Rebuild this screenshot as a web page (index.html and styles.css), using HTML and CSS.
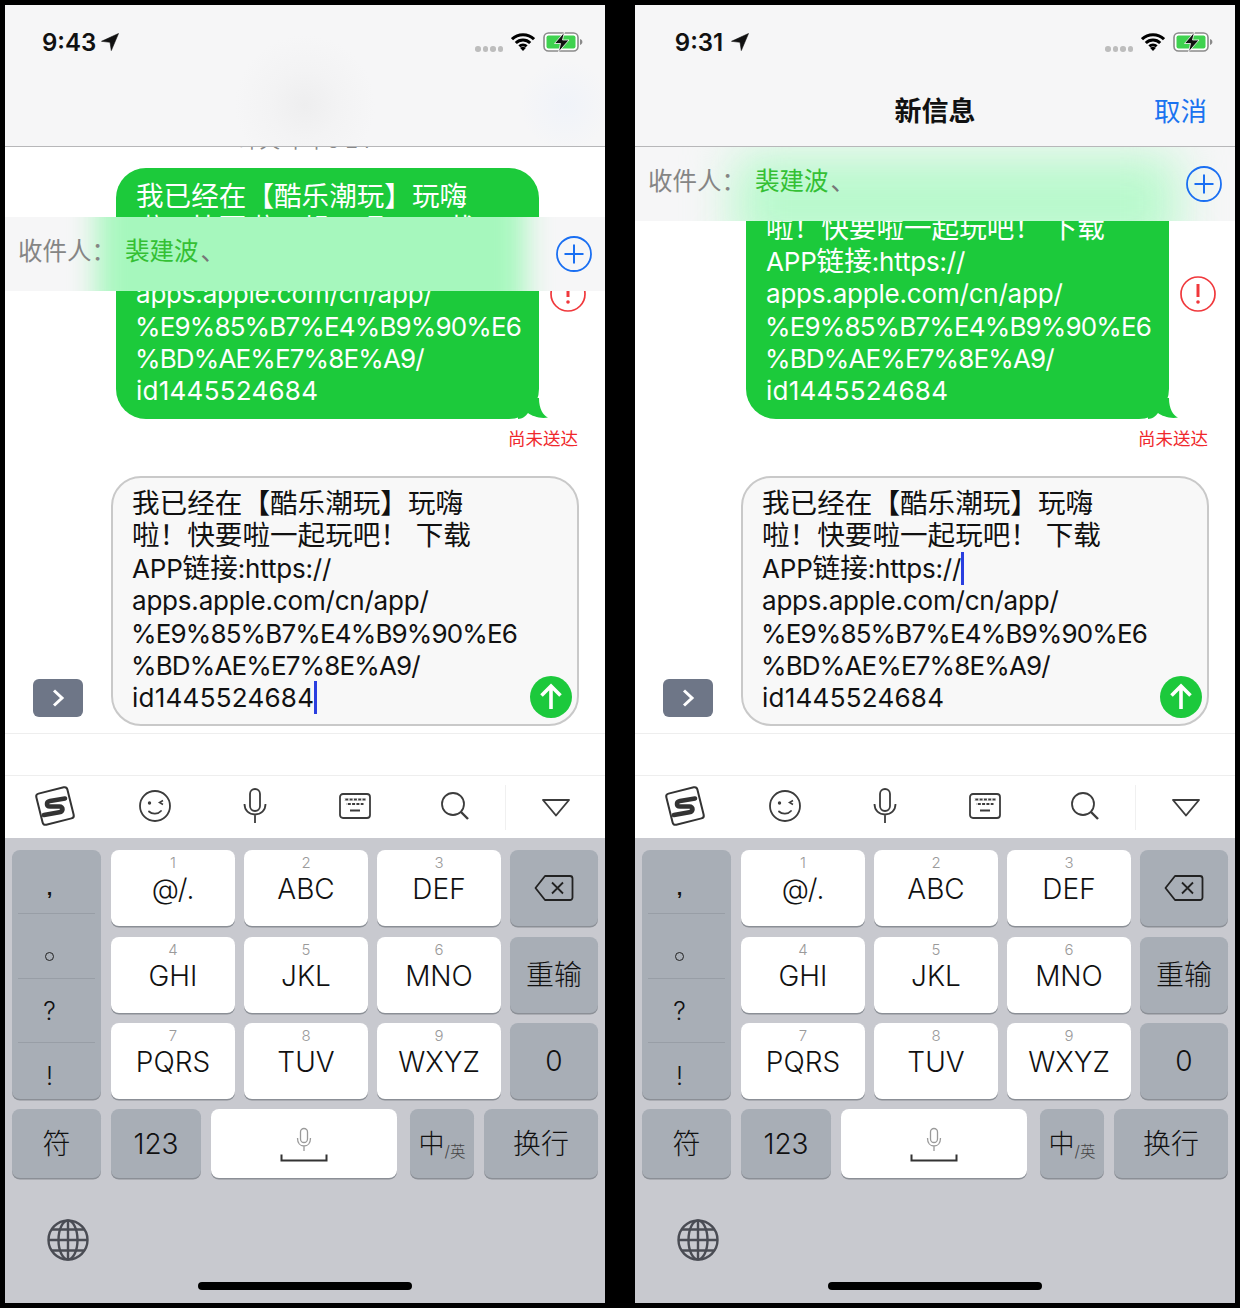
FILE: index.html
```html
<!DOCTYPE html>
<html lang="zh-CN">
<head>
    <meta charset="UTF-8">
    <title>新信息</title>
    <link rel="stylesheet" href="styles.css">
</head>
<body>
    <svg class="defs" width="0" height="0">
        <symbol id="i-arrow" viewBox="0 0 18 18"><path d="M17.500.500.500 8.300l8.500 1 1.300 8.300z" fill="#111" stroke="#111" stroke-width=".6" stroke-linejoin="round"/></symbol>
        <symbol id="i-wifi" viewBox="0 0 24 18"><path d="M1 6.200a15.600 15.600 0 0 1 22 0M4.800 10a10.200 10.200 0 0 1 14.400 0M8.400 13.400a5.100 5.100 0 0 1 7.200 0" fill="none" stroke="#000" stroke-width="3"/><path d="M12 18 9.200 15a4 4 0 0 1 5.600 0z" fill="#000"/></symbol>
        <symbol id="i-battery" viewBox="0 0 40 20"><rect x="1" y="1" width="34" height="18" rx="4.500" fill="#fff" stroke="#8a8a8a" stroke-width="1.600"/><rect x="3.500" y="3.500" width="29" height="13" rx="2" fill="#3fd24f"/><path d="M37 7v6c1.500-.4 2.400-1.600 2.400-3S38.500 7.400 37 7z" fill="#8a8a8a"/><path d="M21.500 0 11.500 11.500h6L15.500 20l10.500-12h-6.500z" fill="#111" stroke="#fff" stroke-width=".8"/></symbol>
        <symbol id="i-plus" viewBox="0 0 36 36"><circle cx="18" cy="18" r="17" fill="none" stroke="#1a6ff2" stroke-width="1.800"/><path d="M18 8.500v19M8.500 18h19" stroke="#1a6ff2" stroke-width="2"/></symbol>
        <symbol id="i-alert" viewBox="0 0 36 36"><circle cx="18" cy="18" r="17" fill="none" stroke="#f0383c" stroke-width="1.700"/><path d="M18 8v13" stroke="#f0383c" stroke-width="3"/><circle cx="18" cy="26" r="1.800" fill="#f0383c"/></symbol>
        <symbol id="i-up" viewBox="0 0 42 42"><circle cx="21" cy="21" r="21" fill="#1cc93c"/><path d="M21 33V10M11.500 19.500 21 10l9.500 9.500" fill="none" stroke="#fff" stroke-width="3.600"/></symbol>
        <symbol id="i-chevron" viewBox="0 0 14 20"><path d="m3 2.500 8 7.500-8 7.500" fill="none" stroke="#fff" stroke-width="3"/></symbol>
        <symbol id="i-sogou" viewBox="0 0 44 44"><rect x="6" y="6" width="32" height="32" rx="3" transform="rotate(-14 22 22)" fill="#fff" stroke="#333" stroke-width="2"/><path d="M32 14.500 17 17c-4 .7-4 5.500 0 5.500h9.500c4 0 4 5-.2 5.800L11 31" fill="none" stroke="#333" stroke-width="4.600" stroke-linecap="round"/></symbol>
        <symbol id="i-smile" viewBox="0 0 34 34"><circle cx="17" cy="17" r="15" fill="none" stroke="#3c3c3c" stroke-width="1.800"/><circle cx="11.500" cy="14" r="1.700" fill="#3c3c3c"/><path d="m25 11.500-3.500 2 3.500 2" fill="none" stroke="#3c3c3c" stroke-width="1.500"/><path d="M11 22.500c3 3 9 3 12-.5" fill="none" stroke="#3c3c3c" stroke-width="1.800" stroke-linecap="round"/></symbol>
        <symbol id="i-mic" viewBox="0 0 24 36"><rect x="7" y="1" width="10" height="22" rx="5" fill="none" stroke="#3c3c3c" stroke-width="1.800"/><path d="M1.500 16c0 6.500 4.500 10.500 10.500 10.500S22.500 22.500 22.500 16M12 26.500V35" fill="none" stroke="#3c3c3c" stroke-width="1.800"/></symbol>
        <symbol id="i-keyboard" viewBox="0 0 32 26"><rect x="1" y="1" width="30" height="24" rx="3" fill="none" stroke="#3c3c3c" stroke-width="1.800"/><path d="M5 6.500h22M7.500 11h17M11 17.500h10" fill="none" stroke="#3c3c3c" stroke-width="2.200"/><path d="M5 6.500h22M7.500 11h17" fill="none" stroke="#fff" stroke-width="2.400" stroke-dasharray="1.300 3"/></symbol>
        <symbol id="i-search" viewBox="0 0 30 30"><circle cx="13" cy="13" r="11" fill="none" stroke="#3c3c3c" stroke-width="1.800"/><path d="m21 21 7 7" stroke="#3c3c3c" stroke-width="2.400"/></symbol>
        <symbol id="i-down" viewBox="0 0 30 20"><path d="M2 2h26L15 17.500z" fill="none" stroke="#3c3c3c" stroke-width="1.900" stroke-linejoin="round"/></symbol>
        <symbol id="i-delete" viewBox="0 0 40 28"><path d="M11 2h25a2.500 2.500 0 0 1 2.500 2.500v19A2.500 2.500 0 0 1 36 26H11L1.500 14z" fill="none" stroke="#222" stroke-width="1.800" stroke-linejoin="round"/><path d="m18 8.500 11 11M29 8.500l-11 11" stroke="#222" stroke-width="1.800"/></symbol>
        <symbol id="i-space" viewBox="0 0 48 46"><rect x="20.500" y="7.500" width="7" height="14" rx="3.500" fill="none" stroke="#9a9a9a" stroke-width="1.300"/><path d="M17.500 17c0 5 2.700 8 6.500 8s6.500-3 6.500-8M24 25v5" fill="none" stroke="#9a9a9a" stroke-width="1.300"/><path d="M1.500 33.500v6h45v-6" fill="none" stroke="#333" stroke-width="2"/></symbol>
        <symbol id="i-globe" viewBox="0 0 42 42"><g fill="none" stroke="#4a4c54" stroke-width="2.400"><circle cx="21" cy="21" r="19.500"/><ellipse cx="21" cy="21" rx="9.500" ry="19.500"/><path d="M21 1.500v39M1.500 21h39M4.500 10.500h33M4.500 31.500h33"/></g></symbol>
    </svg>

    <!-- left: recipient bar slid over the bubble -->
    <div class="screen">
        <header class="top top-blur">
            <div class="status">
                <span class="time">9:43</span>
                <svg class="loc"><use href="#i-arrow"/></svg>
                <span class="dots"><i></i><i></i><i></i><i></i></span>
                <svg class="wifi"><use href="#i-wifi"/></svg>
                <svg class="battery"><use href="#i-battery"/></svg>
            </div>
        </header>
        <div class="to-bar to-moved">
            <span class="to-label">收件人：</span>
            <span class="to-name">裴建波<em>、</em></span>
            <svg class="to-plus"><use href="#i-plus"/></svg>
        </div>
        <section class="thread">
            <div class="stamp">昨天 下午6:24</div>
            <div class="msg-row">
                <div class="bubble">我已经在【酷乐潮玩】玩嗨<br>啦！快要啦一起玩吧！ 下载<br><span class="url">APP</span>链接<span class="url">:https://</span><br><span class="url">apps.apple.com/cn/app/</span><br><span class="url pct">%E9%85%B7%E4%B9%90%E6</span><br><span class="url pct">%BD%AE%E7%8E%A9/</span><br><span class="url num">id1445524684</span>
                    <svg class="tail" viewBox="0 0 30 21"><path d="M0 0h21c0 11 4 17 9 19.500-8 1.500-16-1.500-20-4.500-2 3-6 6-10 6z" fill="#1cca3b"/></svg>
                </div>
                <svg class="alert"><use href="#i-alert"/></svg>
            </div>
            <div class="undelivered">尚未送达</div>
            <div class="compose-row">
                <div class="more"><svg class="more-icon"><use href="#i-chevron"/></svg></div>
                <div class="compose">我已经在【酷乐潮玩】玩嗨<br>啦！快要啦一起玩吧！ 下载<br><span class="url">APP</span>链接<span class="url">:https://</span><br><span class="url">apps.apple.com/cn/app/</span><br><span class="url pct">%E9%85%B7%E4%B9%90%E6</span><br><span class="url pct">%BD%AE%E7%8E%A9/</span><br><span class="url num">id1445524684</span><span class="caret"></span>
                    <svg class="send"><use href="#i-up"/></svg>
                </div>
            </div>
        </section>
        <div class="strip"></div>
        <div class="tools">
            <span class="tool"><svg class="ic-sogou"><use href="#i-sogou"/></svg></span>
            <span class="tool"><svg class="ic-smile"><use href="#i-smile"/></svg></span>
            <span class="tool"><svg class="ic-mic"><use href="#i-mic"/></svg></span>
            <span class="tool"><svg class="ic-keyboard"><use href="#i-keyboard"/></svg></span>
            <span class="tool"><svg class="ic-search"><use href="#i-search"/></svg></span>
            <span class="tool tool-last"><svg class="ic-down"><use href="#i-down"/></svg></span>
        </div>
        <div class="keyboard">
            <div class="keys">
                <div class="key grey punct">
                    <span class="p-comma">,</span>
                    <span class="p-dot"></span>
                    <span>?</span>
                    <span class="p-bang">!</span>
                </div>
                <div class="key"><small>1</small>@/.</div>
                <div class="key"><small>2</small>ABC</div>
                <div class="key"><small>3</small>DEF</div>
                <div class="key grey plain"><svg class="ic-delete"><use href="#i-delete"/></svg></div>
                <div class="key"><small>4</small>GHI</div>
                <div class="key"><small>5</small>JKL</div>
                <div class="key"><small>6</small>MNO</div>
                <div class="key grey plain">重输</div>
                <div class="key"><small>7</small>PQRS</div>
                <div class="key"><small>8</small>TUV</div>
                <div class="key"><small>9</small>WXYZ</div>
                <div class="key grey plain">0</div>
            </div>
            <div class="bottom-keys">
                <div class="key grey plain k-sym">符</div>
                <div class="key grey plain k-num">123</div>
                <div class="key plain k-space"><svg class="ic-space"><use href="#i-space"/></svg></div>
                <div class="key grey plain k-lang">中<span>/英</span></div>
                <div class="key grey plain k-enter">换行</div>
            </div>
            <svg class="globe"><use href="#i-globe"/></svg>
            <div class="home"></div>
        </div>
    </div>

    <!-- right: new message, recipient bar under the nav -->
    <div class="screen">
        <header class="top">
            <div class="status">
                <span class="time">9:31</span>
                <svg class="loc"><use href="#i-arrow"/></svg>
                <span class="dots"><i></i><i></i><i></i><i></i></span>
                <svg class="wifi"><use href="#i-wifi"/></svg>
                <svg class="battery"><use href="#i-battery"/></svg>
            </div>
            <div class="nav">
                <span></span>
                <span class="nav-title">新信息</span>
                <span class="nav-cancel">取消</span>
            </div>
        </header>
        <div class="to-bar to-home">
            <span class="to-label">收件人：</span>
            <span class="to-name">裴建波<em>、</em></span>
            <svg class="to-plus"><use href="#i-plus"/></svg>
        </div>
        <section class="thread">
            <div class="stamp">昨天 下午6:24</div>
            <div class="msg-row">
                <div class="bubble">我已经在【酷乐潮玩】玩嗨<br>啦！快要啦一起玩吧！ 下载<br><span class="url">APP</span>链接<span class="url">:https://</span><br><span class="url">apps.apple.com/cn/app/</span><br><span class="url pct">%E9%85%B7%E4%B9%90%E6</span><br><span class="url pct">%BD%AE%E7%8E%A9/</span><br><span class="url num">id1445524684</span>
                    <svg class="tail" viewBox="0 0 30 21"><path d="M0 0h21c0 11 4 17 9 19.500-8 1.500-16-1.500-20-4.500-2 3-6 6-10 6z" fill="#1cca3b"/></svg>
                </div>
                <svg class="alert"><use href="#i-alert"/></svg>
            </div>
            <div class="undelivered">尚未送达</div>
            <div class="compose-row">
                <div class="more"><svg class="more-icon"><use href="#i-chevron"/></svg></div>
                <div class="compose">我已经在【酷乐潮玩】玩嗨<br>啦！快要啦一起玩吧！ 下载<br><span class="url">APP</span>链接<span class="url">:https://</span><span class="caret"></span><br><span class="url">apps.apple.com/cn/app/</span><br><span class="url pct">%E9%85%B7%E4%B9%90%E6</span><br><span class="url pct">%BD%AE%E7%8E%A9/</span><br><span class="url num">id1445524684</span>
                    <svg class="send"><use href="#i-up"/></svg>
                </div>
            </div>
        </section>
        <div class="strip"></div>
        <div class="tools">
            <span class="tool"><svg class="ic-sogou"><use href="#i-sogou"/></svg></span>
            <span class="tool"><svg class="ic-smile"><use href="#i-smile"/></svg></span>
            <span class="tool"><svg class="ic-mic"><use href="#i-mic"/></svg></span>
            <span class="tool"><svg class="ic-keyboard"><use href="#i-keyboard"/></svg></span>
            <span class="tool"><svg class="ic-search"><use href="#i-search"/></svg></span>
            <span class="tool tool-last"><svg class="ic-down"><use href="#i-down"/></svg></span>
        </div>
        <div class="keyboard">
            <div class="keys">
                <div class="key grey punct">
                    <span class="p-comma">,</span>
                    <span class="p-dot"></span>
                    <span>?</span>
                    <span class="p-bang">!</span>
                </div>
                <div class="key"><small>1</small>@/.</div>
                <div class="key"><small>2</small>ABC</div>
                <div class="key"><small>3</small>DEF</div>
                <div class="key grey plain"><svg class="ic-delete"><use href="#i-delete"/></svg></div>
                <div class="key"><small>4</small>GHI</div>
                <div class="key"><small>5</small>JKL</div>
                <div class="key"><small>6</small>MNO</div>
                <div class="key grey plain">重输</div>
                <div class="key"><small>7</small>PQRS</div>
                <div class="key"><small>8</small>TUV</div>
                <div class="key"><small>9</small>WXYZ</div>
                <div class="key grey plain">0</div>
            </div>
            <div class="bottom-keys">
                <div class="key grey plain k-sym">符</div>
                <div class="key grey plain k-num">123</div>
                <div class="key plain k-space"><svg class="ic-space"><use href="#i-space"/></svg></div>
                <div class="key grey plain k-lang">中<span>/英</span></div>
                <div class="key grey plain k-enter">换行</div>
            </div>
            <svg class="globe"><use href="#i-globe"/></svg>
            <div class="home"></div>
        </div>
    </div>
</body>
</html>
```

FILE: styles.css
```css
* {
    box-sizing: border-box;
}

html, body {
    margin: 0;
    height: 1308px;
    overflow: hidden;
}

body {
    background: #000;
    padding: 5px;
    display: flex;
    gap: 30px;
    font-family: Inter, "Noto Sans CJK SC", sans-serif;
    color: #111;
}

.defs {
    position: absolute;
}

svg {
    display: block;
}

.screen {
    position: relative;
    width: 600px;
    height: 1298px;
    background: #fff;
    overflow: hidden;
}

/* top bar */
.top {
    position: relative;
    z-index: 3;
    height: 142px;
    background: #f6f6f7;
    border-bottom: 1px solid #b7b7b9;
}

.top-blur {
    background:
        radial-gradient(circle at 300px 100px, #eeeeef 0, #f3f3f4 35px, rgba(246,246,247,0) 70px),
        radial-gradient(circle at 560px 100px, #f0f3f9 0, rgba(246,246,247,0) 45px),
        #f6f6f7;
}

.status {
    display: flex;
    align-items: center;
    height: 74px;
    padding-left: 37px;
}

.time {
    width: 54px;
    font-size: 24px;
    font-weight: 600;
    text-align: center;
    white-space: nowrap;
}

.loc {
    width: 18px;
    height: 18px;
    margin-left: 5px;
}

.dots {
    display: flex;
    gap: 2px;
    margin-left: auto;
    margin-top: 14px;
}

.dots i {
    width: 5.5px;
    height: 5.5px;
    border-radius: 50%;
    background: #bdbdbd;
}

.wifi {
    width: 24px;
    height: 18px;
    margin-left: 8px;
    margin-top: -1px;
}

.battery {
    width: 40px;
    height: 20px;
    margin-left: 8px;
    margin-right: 22px;
}

.nav {
    display: grid;
    grid-template-columns: 1fr auto 1fr;
    align-items: center;
    height: 60px;
    padding: 0 28px;
}

.nav-title {
    font-size: 27px;
    font-weight: 700;
}

.nav-cancel {
    font-size: 26.5px;
    color: #1a73f0;
    text-align: right;
}

/* recipient bar, floats above the thread */
.to-bar {
    position: absolute;
    left: 0;
    right: 0;
    z-index: 2;
    height: 74px;
    display: flex;
    align-items: center;
    padding: 0 13px;
    background: #f6f6f7;
    overflow: hidden;
}

.to-bar::before {
    content: "";
    position: absolute;
    filter: blur(14px);
}

.to-moved {
    top: 212px;
}

.to-moved::before {
    left: 92px;
    right: 80px;
    top: -30px;
    bottom: -30px;
    background: #a6f7bd;
}

.to-home {
    top: 142px;
}

.to-home::before {
    left: 100px;
    right: 58px;
    top: 8px;
    bottom: -30px;
    background: #b8f9cc;
    filter: blur(24px);
}

.to-label, .to-name, .to-plus {
    position: relative;
}

.to-label {
    font-size: 24.5px;
    color: #858585;
    width: 107px;
    margin-top: -10px;
}

.to-name {
    font-size: 24.5px;
    color: #34c034;
    margin-top: -10px;
}

.to-name em {
    font-style: normal;
    color: #777;
    margin-left: 2px;
}

.to-plus {
    width: 36px;
    height: 36px;
    margin-left: auto;
}

/* thread */
.thread {
    height: 587px;
    border-bottom: 1px solid #eeeeee;
    overflow: hidden;
}

.stamp {
    margin-top: -18px;
    height: 24px;
    line-height: 24px;
    text-align: center;
    font-size: 20.5px;
    color: #888;
}

.msg-row {
    display: flex;
    align-items: center;
    gap: 11px;
    margin-top: 15px;
    padding-left: 111px;
}

.bubble {
    position: relative;
    width: 423px;
    height: 251px;
    padding: 12px 0 0 20px;
    border-radius: 30px;
    background: #1cca3b;
    color: #fff;
    font-size: 27.6px;
    line-height: 32.4px;
    white-space: nowrap;
}

/* latin runs sit a little narrower than the CJK around them */
.url {
    font-size: 26px;
    line-height: 1;
    letter-spacing: -0.2px;
}

.pct {
    margin-left: -1px;
    letter-spacing: -0.85px;
}

.num {
    letter-spacing: 0.25px;
}

.tail {
    position: absolute;
    right: -9px;
    bottom: 0;
    width: 30px;
    height: 21px;
}

.alert {
    width: 36px;
    height: 36px;
}

.undelivered {
    margin-top: 8px;
    padding-right: 27px;
    height: 24px;
    line-height: 24px;
    text-align: right;
    font-size: 17.5px;
    color: #f0282c;
}

.compose-row {
    display: flex;
    align-items: flex-end;
    margin-top: 25px;
    padding-left: 28px;
}

.more {
    display: flex;
    align-items: center;
    justify-content: center;
    width: 50px;
    height: 38px;
    margin-bottom: 9px;
    margin-right: 28px;
    border-radius: 6px;
    background: #6e7687;
}

.more-icon {
    width: 14px;
    height: 20px;
}

.compose {
    position: relative;
    width: 468px;
    height: 250px;
    padding: 9px 0 0 19px;
    border: 2px solid #c9c9c9;
    border-radius: 30px;
    background: #f8f8f8;
    font-size: 27.6px;
    line-height: 32.4px;
    white-space: nowrap;
}

/* negative margins keep the caret from growing its line */
.caret {
    display: inline-block;
    width: 3px;
    height: 33px;
    margin: -6px 0 -6px 0;
    vertical-align: -1px;
    background: #2a3fe0;
}

.send {
    position: absolute;
    right: 5px;
    bottom: 6px;
    width: 42px;
    height: 42px;
}

.strip {
    height: 41px;
}

/* sogou toolbar */
.tools {
    display: flex;
    height: 63px;
    padding-bottom: 2px;
    border-top: 1px solid #eeeeee;
}

.tool {
    display: flex;
    align-items: center;
    justify-content: center;
    width: 100px;
}

.tool-last {
    border-left: 1px solid #f0f0f0;
    margin: 9px 0 6px;
}

.ic-sogou { width: 44px; height: 44px; }
.ic-smile { width: 34px; height: 34px; }
.ic-mic { width: 24px; height: 36px; }
.ic-keyboard { width: 32px; height: 26px; }
.ic-search { width: 30px; height: 30px; }
.ic-down { width: 30px; height: 20px; }

/* keyboard */
.keyboard {
    height: 465px;
    padding: 12px 7px 0;
    background: #c8c9cf;
}

.keys {
    display: grid;
    grid-template-columns: 90px 124px 124px 124px 88px;
    grid-template-rows: 76px 76px 76px;
    column-gap: 9px;
    row-gap: 10.5px;
}

.key {
    display: flex;
    flex-direction: column;
    align-items: center;
    background: #fff;
    border-radius: 8px;
    box-shadow: 0 1.5px 0 #8b8f96;
    font-size: 28px;
    font-weight: 300;
    line-height: 34px;
    color: #111;
}

.key small {
    height: 19px;
    margin-top: 3px;
    font-size: 15px;
    line-height: 19px;
    color: #9a9a9a;
}

.grey {
    background: #a8aeb6;
}

.plain {
    justify-content: center;
}

.punct {
    grid-row: 1 / span 3;
    display: grid;
    grid-template-rows: 63px 65px 64px 1fr;
    margin-right: 1px;
    padding: 0 6px;
    align-items: stretch;
    justify-items: stretch;
}

.punct span {
    display: flex;
    align-items: center;
    justify-content: center;
    padding-right: 14px;
    font-size: 25px;
    border-top: 1px solid #989ea6;
}

.punct span:first-child {
    border-top: none;
}

.punct .p-comma {
    padding-top: 12px;
    font-family: "Liberation Sans", sans-serif;
    font-size: 20px;
    font-weight: 700;
}

.p-dot {
    padding-top: 20px;
}

.p-dot::after {
    content: "";
    width: 7px;
    height: 7px;
    border: 1.5px solid #222;
    border-radius: 50%;
}

.punct .p-bang {
    padding-top: 10px;
}

.ic-delete {
    width: 40px;
    height: 28px;
}

.bottom-keys {
    display: flex;
    height: 69px;
    margin-top: 10px;
    gap: 10px;
}

.k-sym { width: 89px; }
.k-num { width: 90px; }
.k-space { width: 186px; }
.k-lang { width: 64px; margin-left: 3px; flex-direction: row; font-size: 26px; }
.k-enter { width: 114px; }

.k-lang span {
    font-size: 15.5px;
    margin-top: 16px;
    color: #444;
}

.ic-space {
    width: 48px;
    height: 46px;
}

.globe {
    width: 42px;
    height: 42px;
    margin: 41px 0 0 35px;
}

.home {
    width: 214px;
    height: 8px;
    margin: 21px auto 0;
    border-radius: 4px;
    background: #000;
}
```
